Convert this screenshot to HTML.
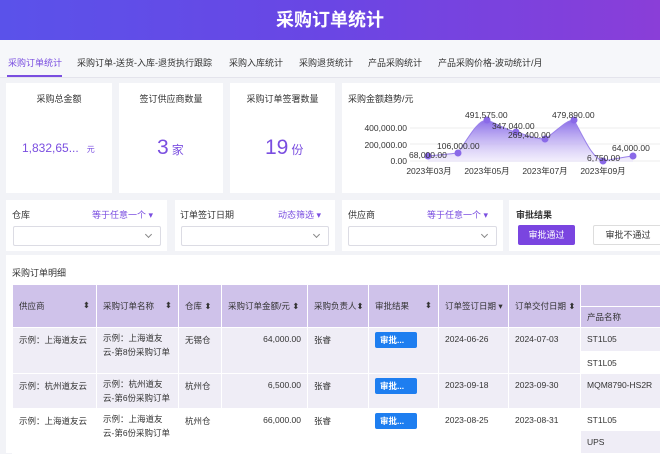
<!DOCTYPE html><html><head><meta charset="utf-8"><style>
*{margin:0;padding:0;box-sizing:border-box}
body{width:660px;height:453px;overflow:hidden;background:#f2f3f7;font-family:"Liberation Sans","Noto Sans CJK SC",sans-serif;font-size:9px;color:#333;position:relative;white-space:nowrap}
.a{position:absolute}
.hd{left:0;top:0;width:660px;height:40px;background:linear-gradient(90deg,#5a52ea,#6a46e4 50%,#8a3ed8);color:#fff;font-size:18px;font-weight:bold;text-align:center;line-height:40px}
.tabs{left:0;top:40px;width:660px;height:38px;background:#f6f7fa;border-bottom:1px solid #e4e4ec}
.tab{position:absolute;top:16px;font-size:9px;color:#333}
.card{background:#fff;position:absolute}
.pu{color:#7a4ee0}
.sel{position:absolute;height:20px;border:1px solid #dcdce4;border-radius:2px;background:#fff}
.sel:after{content:"";position:absolute;right:9px;top:5px;width:4px;height:4px;border-right:1px solid #888;border-bottom:1px solid #888;transform:rotate(45deg)}
table{border-collapse:collapse;table-layout:fixed;position:absolute;left:12px;top:284px;font-size:8.5px;width:660px}
td{border:1px solid #fff;padding:0 6px;vertical-align:top;overflow:hidden;white-space:nowrap}
.th{background:#cfc2ea;color:#333;vertical-align:middle}
.r td{background:#efedf6}
.w td{background:#fff}
.bt{display:inline-block;background:#1e7ef0;color:#fff;border-radius:2px;width:42px;height:16px;line-height:16px;padding-left:5px;font-weight:bold}
.p{padding-top:6px}
</style></head><body>
<div class="a hd">采购订单统计</div>
<div class="a tabs">
<span class="tab pu" style="left:8px">采购订单统计</span>
<div class="a" style="left:7px;top:35px;width:55px;height:2px;background:#7a4ee0"></div>
<span class="tab" style="left:77px">采购订单-送货-入库-退货执行跟踪</span>
<span class="tab" style="left:229px">采购入库统计</span>
<span class="tab" style="left:299px">采购退货统计</span>
<span class="tab" style="left:368px">产品采购统计</span>
<span class="tab" style="left:438px">产品采购价格-波动统计/月</span>
</div>
<div class="card" style="left:6px;top:83px;width:106px;height:110px"><div class="a" style="left:0;width:106px;text-align:center;top:9px">采购总金额</div><div class="a pu" style="left:16px;top:58px;font-size:12px">1,832,65...<span style="font-size:8px;margin-left:8px">元</span></div></div>
<div class="card" style="left:119px;top:83px;width:104px;height:110px"><div class="a" style="left:0;width:104px;text-align:center;top:9px">签订供应商数量</div><div class="a pu" style="left:38px;top:53px;font-size:21px">3<span style="font-size:12px;margin-left:3px">家</span></div></div>
<div class="card" style="left:230px;top:83px;width:105px;height:110px"><div class="a" style="left:0;width:105px;text-align:center;top:9px">采购订单签署数量</div><div class="a pu" style="left:35px;top:53px;font-size:21px">19<span style="font-size:12px;margin-left:3px">份</span></div></div>
<div class="card" style="left:342px;top:83px;width:318px;height:110px"><div class="a" style="left:6px;top:9px">采购金额趋势/元</div></div>
<svg class="a" style="left:0;top:0" width="660" height="200" font-family="Liberation Sans" font-size="8.5" fill="#333">
<defs><linearGradient id="g" x1="0" y1="0" x2="0" y2="1"><stop offset="0" stop-color="#8b6ee8"/><stop offset="1" stop-color="#ece6fb" stop-opacity=".6"/></linearGradient></defs>
<g stroke="#eee"><line x1="410" y1="128" x2="660" y2="128"/><line x1="410" y1="144" x2="660" y2="144"/><line x1="410" y1="161" x2="660" y2="161"/></g>
<path d="M428,156 C440,155 448,154 458,153 C470,135 478,120 487,120 C498,124 506,130 516,132 C527,135 535,139 545,139 C558,130 566,120 574,120 C584,138 592,158 603,161 C615,159 624,157 633,156 L633,162 L428,162Z" fill="url(#g)"/>
<path d="M428,156 C440,155 448,154 458,153 C470,135 478,120 487,120 C498,124 506,130 516,132 C527,135 535,139 545,139 C558,130 566,120 574,120 C584,138 592,158 603,161 C615,159 624,157 633,156" fill="none" stroke="#9a82ea"/>
<g fill="#8a6ae8"><circle cx="428" cy="156" r="3.5"/><circle cx="458" cy="153" r="3.5"/><circle cx="487" cy="120" r="3.5"/><circle cx="516" cy="132" r="3.5"/><circle cx="545" cy="139" r="3.5"/><circle cx="574" cy="120" r="3.5"/><circle cx="603" cy="161" r="3.5"/><circle cx="633" cy="156" r="3.5"/></g>
<g text-anchor="end"><text x="407" y="131">400,000.00</text><text x="407" y="148">200,000.00</text><text x="407" y="164">0.00</text></g>
<text x="409" y="158">68,000.00</text><text x="437" y="149">106,000.00</text><text x="465" y="118">491,575.00</text><text x="492" y="129">347,040.00</text><text x="508" y="138">269,400.00</text><text x="552" y="118">479,890.00</text><text x="587" y="161">6,750.00</text><text x="612" y="151">64,000.00</text>
<g text-anchor="middle"><text x="429" y="174">2023年03月</text><text x="487" y="174">2023年05月</text><text x="545" y="174">2023年07月</text><text x="603" y="174">2023年09月</text></g>
</svg>
<div class="card" style="left:6px;top:200px;width:161px;height:51px"><div class="a" style="left:6px;top:8px">仓库</div><div class="a pu" style="left:86px;top:8px">等于任意一个 ▾</div><div class="sel" style="left:7px;top:26px;width:148px"></div></div>
<div class="card" style="left:175px;top:200px;width:160px;height:51px"><div class="a" style="left:5px;top:8px">订单签订日期</div><div class="a pu" style="left:103px;top:8px">动态筛选 ▾</div><div class="sel" style="left:6px;top:26px;width:148px"></div></div>
<div class="card" style="left:342px;top:200px;width:161px;height:51px"><div class="a" style="left:6px;top:8px">供应商</div><div class="a pu" style="left:85px;top:8px">等于任意一个 ▾</div><div class="sel" style="left:6px;top:26px;width:149px"></div></div>
<div class="card" style="left:509px;top:200px;width:151px;height:51px"><div class="a" style="left:7px;top:8px;font-weight:bold">审批结果</div>
<div class="a" style="left:9px;top:25px;width:57px;height:20px;background:#7a45e0;color:#fff;text-align:center;line-height:20px;border-radius:2px">审批通过</div>
<div class="a" style="left:84px;top:25px;width:70px;height:20px;border:1px solid #ddd;background:#fff;text-align:center;line-height:18px;border-radius:2px">审批不通过</div></div>
<div class="card" style="left:6px;top:255px;width:654px;height:198px"><div class="a" style="left:6px;top:11px">采购订单明细</div></div>
<table>
<colgroup><col style="width:84px"><col style="width:82px"><col style="width:43px"><col style="width:86px"><col style="width:61px"><col style="width:70px"><col style="width:70px"><col style="width:72px"><col style="width:92px"></colgroup>
<tr style="height:22px"><td class="th" rowspan="2">供应商 <span style="float:right">⬍</span></td><td class="th" rowspan="2">采购订单名称 <span style="float:right">⬍</span></td><td class="th" rowspan="2">仓库 ⬍</td><td class="th" rowspan="2">采购订单金额/元 ⬍</td><td class="th" rowspan="2">采购负责人⬍</td><td class="th" rowspan="2">审批结果 <span style="float:right">⬍</span></td><td class="th" rowspan="2">订单签订日期 ▾</td><td class="th" rowspan="2">订单交付日期 ⬍</td><td class="th"></td></tr>
<tr style="height:21px"><td class="th">产品名称</td></tr>
<tr class="r" style="height:24px"><td rowspan="2" class="p">示例：上海道友云</td><td rowspan="2" class="p" style="line-height:14px;padding-top:3px">示例：上海道友<br>云-第8份采购订单</td><td rowspan="2" class="p">无锡仓</td><td rowspan="2" class="p" style="text-align:right">64,000.00</td><td rowspan="2" class="p">张睿</td><td rowspan="2" style="padding-top:4px"><span class="bt">审批...</span></td><td rowspan="2" class="p">2024-06-26</td><td rowspan="2" class="p">2024-07-03</td><td class="p">ST1L05</td></tr>
<tr style="height:22px"><td class="p" style="background:#fff">ST1L05</td></tr>
<tr class="r" style="height:35px"><td class="p">示例：杭州道友云</td><td style="line-height:14px;padding-top:3px">示例：杭州道友<br>云-第6份采购订单</td><td class="p">杭州仓</td><td class="p" style="text-align:right">6,500.00</td><td class="p">张睿</td><td style="padding-top:4px"><span class="bt">审批...</span></td><td class="p">2023-09-18</td><td class="p">2023-09-30</td><td class="p">MQM8790-HS2R</td></tr>
<tr class="w" style="height:22px"><td rowspan="2" class="p">示例：上海道友云</td><td rowspan="2" style="line-height:14px;padding-top:3px">示例：上海道友<br>云-第6份采购订单</td><td rowspan="2" class="p">杭州仓</td><td rowspan="2" class="p" style="text-align:right">66,000.00</td><td rowspan="2" class="p">张睿</td><td rowspan="2" style="padding-top:4px"><span class="bt">审批...</span></td><td rowspan="2" class="p">2023-08-25</td><td rowspan="2" class="p">2023-08-31</td><td class="p">ST1L05</td></tr>
<tr style="height:23px"><td class="p" style="background:#efedf6">UPS</td></tr>
</table>
</body></html>
